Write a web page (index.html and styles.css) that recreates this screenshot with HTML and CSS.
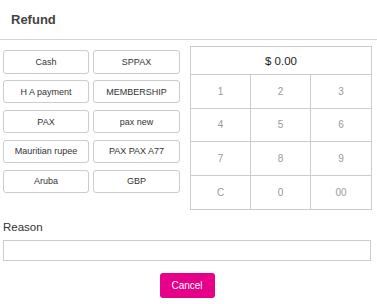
FILE: index.html
```html
<!DOCTYPE html>
<html>
<head>
<meta charset="utf-8">
<link rel="stylesheet" href="styles.css">
</head>
<body>
<div class="header"><h1 class="title">Refund</h1></div>
<div class="main">
  <div class="methods">
    <button class="method">Cash</button>
    <button class="method">SPPAX</button>
    <button class="method">H A payment</button>
    <button class="method">MEMBERSHIP</button>
    <button class="method">PAX</button>
    <button class="method">pax new</button>
    <button class="method">Mauritian rupee</button>
    <button class="method">PAX PAX A77</button>
    <button class="method">Aruba</button>
    <button class="method">GBP</button>
  </div>
  <div class="keypad">
    <div class="amount">$ 0.00</div>
    <div class="key">1</div><div class="key">2</div><div class="key">3</div>
    <div class="key">4</div><div class="key">5</div><div class="key">6</div>
    <div class="key">7</div><div class="key">8</div><div class="key">9</div>
    <div class="key">C</div><div class="key">0</div><div class="key">00</div>
  </div>
</div>
<div class="reason">
  <label class="reason-label">Reason</label>
  <input class="reason-input" type="text">
</div>
<div class="actions"><button class="cancel">Cancel</button></div>
</body>
</html>
```
FILE: styles.css
```css
html, body { margin: 0; padding: 0; background: #fff; }
body { font-family: "Liberation Sans", Arial, sans-serif; color: #333; width: 377px; }
.header { height: 39px; border-bottom: 1px solid #d4d4d4; box-sizing: content-box; display: flex; align-items: center; padding-left: 11px; }
.title { margin: 0; font-size: 13px; font-weight: bold; color: #444; }
.main { display: flex; padding: 6px 6px 0 3px; gap: 10px; }
.methods { display: grid; grid-template-columns: 86px 87px; column-gap: 4px; row-gap: 6.4px; padding-top: 4px; align-content: start; }
.method { height: 23.5px; border: 1px solid #ccc; border-radius: 3px; background: #fff; font-family: "Liberation Sans", Arial, sans-serif; font-size: 9px; color: #333; padding: 0; }
.keypad { display: grid; grid-template-columns: repeat(3, 60px); grid-template-rows: 28px repeat(4, 33.5px); border: 1px solid #ccc; width: 180px; }
.amount { grid-column: 1 / 4; display: flex; align-items: center; justify-content: center; font-size: 11.5px; color: #222; border-bottom: 1px solid #ccc; }
.key { display: flex; align-items: center; justify-content: center; font-size: 10px; color: #999; border-bottom: 1px solid #ccc; border-right: 1px solid #ccc; }
.key:nth-child(3n+1) { border-right: none; }
.key:nth-last-child(-n+3) { border-bottom: none; }
.reason { display: flex; flex-direction: column; padding: 11px 6px 0 3px; }
.reason-label { font-size: 11.5px; color: #333; margin-bottom: 7px; }
.reason-input { height: 21px; box-sizing: border-box; border: 1px solid #ccc; padding: 0 4px; margin: 0; }
.actions { display: flex; justify-content: center; padding: 12px 6px 0 3px; }
.cancel { width: 55px; height: 25px; border: none; border-radius: 3px; background: #e6008a; color: #fff; font-family: "Liberation Sans", Arial, sans-serif; font-size: 10px; padding: 0; }
```
